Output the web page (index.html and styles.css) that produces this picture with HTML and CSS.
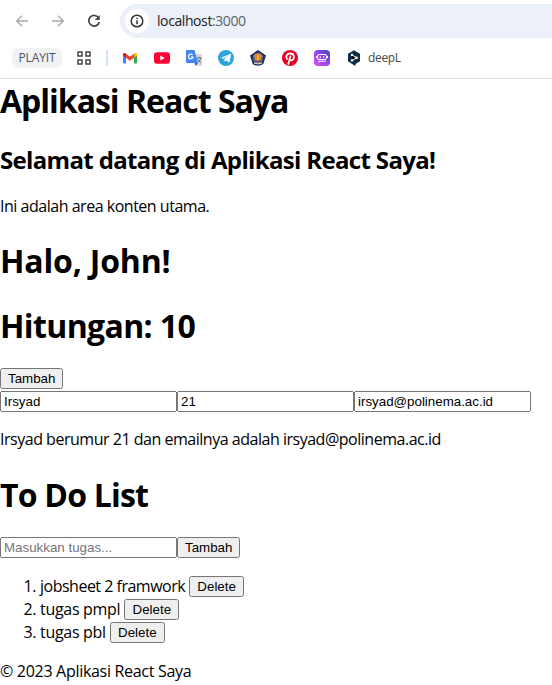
FILE: index.html
```html
<!DOCTYPE html>
<html lang="id">
<head>
<meta charset="utf-8">
<title>Aplikasi React Saya</title>
<link rel="stylesheet" href="styles.css">
</head>
<body>
<header class="browser">
  <div class="toolbar">
    <svg class="nav back" viewBox="0 0 16 16"><path d="M14 8H3M8 2.7 2.7 8 8 13.3"/></svg>
    <svg class="nav forward" viewBox="0 0 16 16"><path d="M2 8h11M8 2.7 13.3 8 8 13.3"/></svg>
    <svg class="nav reload" viewBox="0 0 16 16"><path d="M12.8 5.2A5.3 5.3 0 1 0 13.3 9"/><path class="solid" d="M13.7 2v5H8.8z"/></svg>
    <div class="address">
      <span class="info"><svg viewBox="0 0 16 16"><circle cx="8" cy="8" r="5.8"/><path d="M8 7.3v3.9M8 4.7v1.4"/></svg></span>
      <span class="url">localhost<span class="port">:3000</span></span>
    </div>
  </div>
  <nav class="bookmarks">
    <span class="group">PLAYIT</span>
    <svg class="apps" viewBox="0 0 16 16"><path d="M2 2h4v4H2zM10 2h4v4h-4zM2 10h4v4H2zM10 10h4v4h-4z"/></svg>
    <span class="divider"></span>
    <svg class="mark" viewBox="0 0 16 16"><path fill="#4285f4" d="M1 5l3 2v6.500H2a1 1 0 0 1-1-1z"/><path fill="#34a853" d="M12 7l3-2v7.500a1 1 0 0 1-1 1h-2z"/><path fill="#ea4335" d="M4 3.700 8 6.800l4-3.100v4L8 10.800 4 7.700z"/><path fill="#c5221f" d="M1 4.500C1 2.700 2.800 2.500 4 3.700v4L1 5.500z"/><path fill="#fbbc04" d="M15 4.500c0-1.800-1.800-2-3-.8v4l3-2.200z"/></svg>
    <svg class="mark" viewBox="0 0 16 16"><rect y="2.200" width="16" height="11.600" rx="3" fill="#ff0033"/><path fill="#fff" d="M6.300 5.500v5L10.700 8z"/></svg>
    <svg class="mark" viewBox="0 0 16 16"><path fill="#d7dadd" d="M7 4h8a1 1 0 0 1 1 1v10a1 1 0 0 1-1 1H9.500z"/><path fill="#4285f4" d="M1 0h7.500l3.500 13H1a1 1 0 0 1-1-1V1a1 1 0 0 1 1-1z"/><path fill="#3367d6" d="M8.500 13H12l-2.500 3z"/><path fill="none" stroke="#fff" stroke-width="1.200" d="M6.500 5A2.300 2.300 0 1 0 7 7H4.800"/><path fill="none" stroke="#697780" d="M10.500 8h5M13 6.700V8M14.700 8c-.4 2.200-1.600 3.700-3.200 4.600M11.500 9c.8 1.700 2 2.800 3.500 3.700"/></svg>
    <svg class="mark" viewBox="0 0 16 16"><circle cx="8" cy="8" r="8" fill="#2ca5df"/><path fill="#fff" d="m3 7.700 9.300-3.800c.6-.2.9.1.8.7l-1.500 7.300c-.1.500-.6.600-1 .3L8 10.300l-1.300 1.400-.5-2.500 4-3.500-5 3.100z"/></svg>
    <svg class="mark" viewBox="0 0 16 16"><path fill="#172f66" d="m8 0 8 5.500-2.700 8.500Q8 17.500 2.700 14L0 5.500z"/><circle cx="8" cy="8.300" r="5.200" fill="#b58b61"/><path fill="#ef7d26" d="M8 2.500 10.300 6v5.500H5.700V6z"/><path fill="#f9c83a" d="M7.300 5h1.400v5H7.300z"/><path fill="none" stroke="#384d8c" stroke-width="1.300" d="M3.800 7v3l2 1.500h4.400l2-1.500V7"/><path fill="none" stroke="#e9e7df" d="M4 13q4 2 8 0"/></svg>
    <svg class="mark" viewBox="0 0 16 16"><circle cx="8" cy="8" r="8" fill="#e60023"/><path fill="none" stroke="#fff" stroke-width="1.800" stroke-linecap="round" d="M5 9C3.300 6.500 4.700 3.500 8.200 3.500c5.200 0 4.300 6.800 1.100 6.800-1.200 0-1.800-.6-1.800-1.300M8.400 6.300 6.300 14"/></svg>
    <svg class="mark" viewBox="0 0 16 16"><defs><linearGradient id="violet" x1="0" y1="1" x2="1" y2="0"><stop stop-color="#e34bff"/><stop offset=".5" stop-color="#9546ef"/><stop offset="1" stop-color="#3d4bb3"/></linearGradient></defs><rect width="16" height="16" rx="4" fill="url(#violet)"/><rect x="3.500" y="4.500" width="9" height="5" rx="1.500" fill="none" stroke="#fff"/><path fill="none" stroke="#fff" d="M2.500 6v2M13.500 6v2M4.800 12.500v-1.300H12"/><path stroke="#fff" stroke-width="1.200" d="M6.300 6.300v1.500M9.700 6.300v1.500"/></svg>
    <svg class="mark deepl" viewBox="0 0 16 16"><path fill="#0f2b46" d="m8 .3 6 3.400v7.600L9.500 14v2.200L2 11.300V3.700z"/><path stroke="#fff" d="m6 4.800 4.500 2.900L6 10.500"/><g fill="#fff"><circle cx="6" cy="4.900" r="1.200"/><circle cx="10.600" cy="7.700" r="1.200"/><circle cx="6" cy="10.400" r="1.200"/></g></svg>
    <span class="label">deepL</span>
  </nav>
</header>
<main>
  <h1 class="title">Aplikasi React Saya</h1>
  <h2>Selamat datang di Aplikasi React Saya!</h2>
  <p class="intro">Ini adalah area konten utama.</p>
  <h1 class="hello">Halo, John!</h1>
  <h1 class="count">Hitungan: 10</h1>
  <div class="row"><button class="add">Tambah</button></div>
  <div class="row"><input value="Irsyad"><input value="21"><input value="irsyad@polinema.ac.id"></div>
  <p class="summary">Irsyad berumur 21 dan emailnya adalah irsyad@polinema.ac.id</p>
  <h1 class="todo">To Do List</h1>
  <div class="row"><input placeholder="Masukkan tugas..."><button class="add">Tambah</button></div>
  <ol>
    <li><span class="task long">jobsheet 2 framwork</span><button class="delete">Delete</button></li>
    <li><span class="task">tugas pmpl</span><button class="delete">Delete</button></li>
    <li><span class="task">tugas pbl</span><button class="delete">Delete</button></li>
  </ol>
  <footer>© 2023 Aplikasi React Saya</footer>
</main>
</body>
</html>
```
FILE: styles.css
```css
* { box-sizing: border-box; }
body { margin: 0; background: #fff; color: #000; font: 16px/22px "Open Sans", "Noto Sans", sans-serif; letter-spacing: -.3px; overflow: hidden; }
.browser { height: 79px; border-bottom: 1px solid #dfe1e5; padding-top: 4px; background: #fff; }
.toolbar { display: flex; align-items: center; height: 34px; padding-left: 14px; }
.nav { width: 16px; height: 16px; flex: none; fill: none; stroke: #a9abae; stroke-width: 1.5; }
.forward { margin-left: 20px; }
.reload { margin-left: 20px; stroke: #474747; stroke-width: 1.7; }
.solid { fill: #474747; stroke: none; }
.address { display: flex; align-items: center; flex: 1; height: 34px; margin-left: 18px; padding-left: 5px; background: #ecf0f9; border-radius: 17px 0 0 17px; }
.info { display: flex; align-items: center; justify-content: center; width: 24px; height: 24px; border-radius: 50%; background: #fff; }
.info svg { width: 16px; height: 16px; fill: none; stroke: #333; stroke-width: 1.5; }
.url { margin-left: 8px; font-size: 14px; color: #202124; letter-spacing: -.41px; }
.port { color: #5f6368; }
.bookmarks { display: flex; align-items: center; height: 40px; padding-left: 12px; }
.group { width: 50px; height: 20px; line-height: 20px; border-radius: 6px; background: #f0f2f4; color: #51565c; font-size: 12px; text-align: center; letter-spacing: -.1px; }
.apps { width: 16px; height: 16px; margin-left: 14px; fill: none; stroke: #474747; stroke-width: 1.5; }
.divider { width: 2px; height: 16px; margin: 0 14px; background: #d3e3fd; }
.mark { width: 16px; height: 16px; flex: none; margin-right: 16px; }
.deepl { margin-right: 6px; }
.label { font-size: 12px; color: #474747; letter-spacing: -.35px; }
h1 { font-size: 32px; line-height: 41px; margin: 0; padding-bottom: 2px; white-space: nowrap; }
.title { padding-top: 1px; margin-bottom: 21px; letter-spacing: -1.01px; }
h2 { font-size: 24px; line-height: 32px; margin: 0 0 19px; letter-spacing: -.66px; white-space: nowrap; }
p { margin: 0; letter-spacing: -.48px; white-space: nowrap; }
.hello { margin: 23px 0 22px; letter-spacing: -.17px; }
.count { margin-bottom: 20px; letter-spacing: -.63px; }
.todo { margin: 24px 0 20px; letter-spacing: -.8px; }
.row { display: flex; height: 23px; }
input, button { font: 13.333px/15px "Liberation Sans", Arial, sans-serif; letter-spacing: 0; height: 21px; }
input { width: 177px; padding: 1px 2px; }
button { padding: 1px 6px; }
.add { width: 63px; }
.delete { width: 55px; margin: 1px 0 0 4px; vertical-align: top; }
.summary { margin-top: 14px; }
ol { margin: 15px 0 16px; padding-left: 40px; }
li { height: 23px; white-space: nowrap; }
.long { letter-spacing: -.5px; }
footer { white-space: nowrap; }
```
